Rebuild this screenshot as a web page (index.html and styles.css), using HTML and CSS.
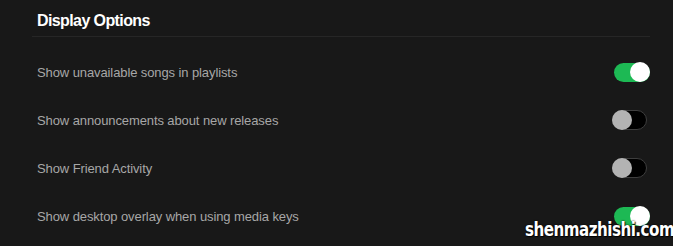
FILE: index.html
```html
<!DOCTYPE html>
<html>
<head>
<meta charset="utf-8">
<link rel="stylesheet" href="styles.css">
</head>
<body>
<div class="page">
  <h2 class="title">Display Options</h2>
  <div class="divider"></div>
  <div class="row">
    <span class="label">Show unavailable songs in playlists</span>
    <span class="toggle on"><span class="knob"></span></span>
  </div>
  <div class="row">
    <span class="label">Show announcements about new releases</span>
    <span class="toggle off"><span class="knob"></span></span>
  </div>
  <div class="row">
    <span class="label">Show Friend Activity</span>
    <span class="toggle off"><span class="knob"></span></span>
  </div>
  <div class="row">
    <span class="label">Show desktop overlay when using media keys</span>
    <span class="toggle on"><span class="knob"></span></span>
  </div>
  <div class="watermark">shenmazhishi.com</div>
</div>
</body>
</html>
```
FILE: styles.css
```css
html, body {
  margin: 0;
  padding: 0;
  background: #181818;
}
.page {
  position: relative;
  width: 673px;
  height: 246px;
  overflow: hidden;
  padding: 0 23px 0 32px;
  box-sizing: border-box;
  font-family: "Liberation Sans", Arial, sans-serif;
}
.title {
  margin: 0;
  padding: 11px 0 0 5px;
  height: 26px;
  box-sizing: border-box;
  font-size: 16px;
  line-height: 20px;
  font-weight: 700;
  letter-spacing: -0.6px;
  color: #ffffff;
}
.divider {
  margin-top: 10px;
  height: 1px;
  background: #262626;
  margin-bottom: 11px;
}
.row {
  display: flex;
  align-items: center;
  justify-content: space-between;
  height: 48px;
  padding-left: 5px;
}
.label {
  font-size: 13px;
  color: #a7a7a7;
  letter-spacing: -0.1px;
}
.toggle {
  position: relative;
  display: flex;
  align-items: center;
  box-sizing: border-box;
  border-radius: 10px;
}
.toggle.on {
  width: 36px;
  height: 19px;
  background: #1db954;
  justify-content: flex-end;
}
.toggle.off {
  width: 35px;
  height: 20px;
  background: #000;
  border: 1px solid #3e3e3e;
  margin-right: 3px;
  justify-content: flex-start;
}
.knob {
  display: block;
  width: 20px;
  height: 20px;
  border-radius: 50%;
}
.toggle.on .knob {
  background: #ffffff;
}
.toggle.off .knob {
  background: #b3b3b3;
  margin-left: -1px;
}
.watermark {
  position: absolute;
  left: 525px;
  top: 217px;
  font-family: "DejaVu Sans Condensed", "DejaVu Sans", sans-serif;
  font-stretch: condensed;
  font-weight: 700;
  font-size: 20px;
  letter-spacing: -0.6px;
  white-space: nowrap;
  color: #ffffff;
  transform: scaleX(0.84);
  transform-origin: left top;
  text-shadow: 0 0 2px #000, 1px 1px 1px #000;
}
```
